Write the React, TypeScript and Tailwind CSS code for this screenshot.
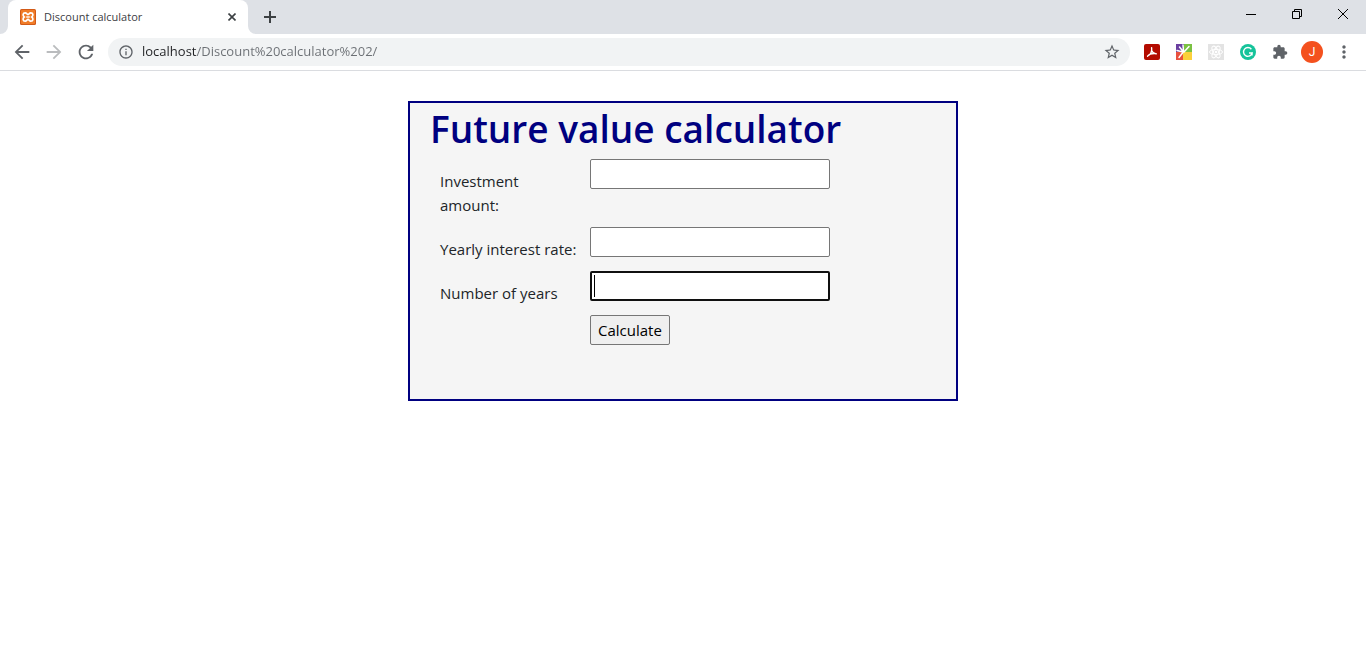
import type { ReactNode } from "react";
import {
  MdArrowBack,
  MdArrowForward,
  MdExtension,
  MdInfoOutline,
  MdMoreVert,
  MdRefresh,
  MdStarBorder,
} from "react-icons/md";

function IconButton({ label, children }: { label: string; children: ReactNode }) {
  return (
    <button type="button" aria-label={label} className="flex size-7 shrink-0 items-center justify-center text-[#5f6368]">
      {children}
    </button>
  );
}

function XamppIcon() {
  return (
    <svg viewBox="0 0 16 16" className="size-4 shrink-0" aria-hidden="true">
      <rect width="16" height="16" rx="1.5" fill="#d25a17" />
      <rect x="1" y="1" width="14" height="14" rx="1" fill="#f07c28" />
      <path
        d="M5.2 3.8c1.6 0 1.6 1.8 2.8 1.8s1.2-1.800 2.8-1.800c2.600 0 2.600 3 1 4.200 1.600 1.200 1.600 4.200-1 4.200-1.600 0-1.600-1.800-2.800-1.800s-1.200 1.800-2.800 1.800c-2.600 0-2.600-3-1-4.200-1.600-1.200-1.600-4.200 1-4.200z"
        fill="none"
        stroke="#fff"
        strokeWidth="1.700"
      />
      <path d="M6.200 8h3.600" stroke="#fff" strokeWidth="1.400" />
    </svg>
  );
}

function TabCorner({ flip }: { flip?: boolean }) {
  return (
    <svg viewBox="0 0 8 8" className={flip ? "size-2 -scale-x-100 self-end" : "size-2 self-end"} aria-hidden="true">
      <path d="M8 0v8H0a8 8 0 0 0 8-8z" fill="#fff" />
    </svg>
  );
}

function TabStrip() {
  return (
    <div className="flex h-[34px] bg-[#dee1e6]">
      <TabCorner />
      <div className="flex w-60 items-center rounded-t-lg bg-white pr-2 pl-3">
        <XamppIcon />
        <span className="ml-2 flex-1 text-[11px] text-[#3c4043]">Discount calculator</span>
        <button type="button" aria-label="Close tab" className="flex size-4 items-center justify-center">
          <svg viewBox="0 0 8 8" className="size-2" aria-hidden="true">
            <path d="M0.5 0.5l7 7M7.5 0.5l-7 7" stroke="#3c4043" strokeWidth="1.6" />
          </svg>
        </button>
      </div>
      <TabCorner flip />
      <button type="button" aria-label="New tab" className="flex w-7 items-center justify-center">
        <svg viewBox="0 0 12 12" className="size-3" aria-hidden="true">
          <path d="M6 0v12M0 6h12" stroke="#3c4043" strokeWidth="2" />
        </svg>
      </button>
      <div className="ml-auto flex h-7">
        <button type="button" aria-label="Minimize" className="flex w-[46px] items-center justify-center">
          <svg viewBox="0 0 10 10" className="size-2.5" aria-hidden="true">
            <path d="M0 5.5h10" stroke="#000" />
          </svg>
        </button>
        <button type="button" aria-label="Restore" className="flex w-[46px] items-center justify-center">
          <svg viewBox="0 0 10 10" className="size-2.5" aria-hidden="true">
            <path d="M0.5 2.5h7v7h-7zM2.5 2.5v-2h7v7h-2" fill="none" stroke="#000" />
          </svg>
        </button>
        <button type="button" aria-label="Close" className="flex w-[46px] items-center justify-center">
          <svg viewBox="0 0 10 10" className="size-2.5" aria-hidden="true">
            <path d="M0 0l10 10M10 0L0 10" stroke="#000" />
          </svg>
        </button>
      </div>
    </div>
  );
}

function Extensions() {
  return (
    <div className="flex items-center gap-1">
      <IconButton label="Adobe Acrobat">
        <svg viewBox="0 0 16 16" className="size-4" aria-hidden="true">
          <rect width="16" height="16" rx="2" fill="#b30b00" />
          <path
            d="M7.600 3.600c0.400 2.400 0.200 3.600-0.600 5.200s-2 3-3.400 3.400M3.600 12.200c1.600-2.200 4.600-3 8.600-2.600M7.600 6.500c0.800 1.800 2.200 3.200 4.600 3.400"
            fill="none"
            stroke="#fff"
            strokeWidth="1.400"
            strokeLinecap="round"
          />
        </svg>
      </IconButton>
      <IconButton label="Colour sparks">
        <svg viewBox="0 0 16 16" className="size-4" aria-hidden="true">
          <path d="M0 0h8v8H0z" fill="#6a3fa0" />
          <path d="M8 0h8v8H8z" fill="#7ac142" />
          <path d="M0 8h7v8H0z" fill="#e8503f" />
          <path d="M7 8h9v8H7z" fill="#fbd03b" />
          <path d="M7.500 8L3.500 3M7 8L1 6.500M7.500 7L7 1M8 8L13 2.500M6.500 9L3 13.500" stroke="#fff" strokeWidth="1.500" strokeLinecap="round" />
        </svg>
      </IconButton>
      <IconButton label="React Developer Tools">
        <svg viewBox="0 0 16 16" className="size-4" aria-hidden="true">
          <rect width="16" height="16" fill="#e3e3e3" />
          <g fill="none" stroke="#fff" strokeWidth="1">
            <ellipse cx="8" cy="8" rx="6.500" ry="2.600" />
            <ellipse cx="8" cy="8" rx="6.500" ry="2.600" transform="rotate(60 8 8)" />
            <ellipse cx="8" cy="8" rx="6.500" ry="2.600" transform="rotate(120 8 8)" />
          </g>
          <circle cx="8" cy="8" r="1.300" fill="#fff" />
        </svg>
      </IconButton>
      <IconButton label="Grammarly">
        <svg viewBox="0 0 16 16" className="size-4" aria-hidden="true">
          <circle cx="8" cy="8" r="8" fill="#15c39a" />
          <path d="M11.400 5.200A4.400 4.400 0 1 0 12.200 9H9M12 8.600v2.800" fill="none" stroke="#fff" strokeWidth="1.400" />
        </svg>
      </IconButton>
      <IconButton label="Extensions">
        <MdExtension className="size-4" />
      </IconButton>
    </div>
  );
}

function Toolbar() {
  return (
    <div className="flex h-[37px] items-center border-b border-[#dadce0] bg-white pr-2 pl-2">
      <div className="flex gap-1">
        <IconButton label="Back">
          <MdArrowBack className="size-[22px]" />
        </IconButton>
        <button type="button" aria-label="Forward" disabled className="flex size-7 items-center justify-center text-[#babcbe]">
          <MdArrowForward className="size-[22px]" />
        </button>
        <IconButton label="Reload">
          <MdRefresh className="size-[22px]" />
        </IconButton>
      </div>
      <div className="ml-2 flex h-7 flex-1 items-center rounded-full bg-[#f1f3f4] pr-1 pl-2.5">
        <button type="button" aria-label="View site information" className="text-[#5f6368]">
          <MdInfoOutline className="size-4" />
        </button>
        <input
          type="text"
          aria-label="Address"
          defaultValue="localhost/Discount%20calculator%202/"
          className="ml-2 min-w-0 flex-1 bg-linear-to-r from-[#202124] from-[55px] to-[#6b6f74] to-[55px] bg-clip-text text-[13px] text-transparent outline-none"
        />
        <IconButton label="Bookmark this page">
          <MdStarBorder className="size-[18px]" />
        </IconButton>
      </div>
      <div className="ml-2 flex items-center">
        <Extensions />
        <button
          type="button"
          aria-label="Profile"
          className="ml-[7px] flex size-[22px] items-center justify-center rounded-full bg-[#f4511e] font-[Roboto] text-xs text-white"
        >
          J
        </button>
        <button type="button" aria-label="Menu" className="ml-[7px] flex w-7 items-center justify-center text-[#5f6368]">
          <MdMoreVert className="size-5" />
        </button>
      </div>
    </div>
  );
}

function Field({ id, label, focused }: { id: string; label: string; focused?: boolean }) {
  return (
    <div className="flex items-start">
      <label htmlFor={id} className="w-40 shrink-0 p-2.5">
        {label}
      </label>
      <div className="relative">
        <input
          id={id}
          type="text"
          autoFocus={focused}
          className="peer block h-[30px] w-60 rounded-xs border border-[#767676] bg-white px-1 text-black caret-transparent outline-none focus:border-2 focus:border-[#101010]"
        />
        <span aria-hidden="true" className="absolute top-1 left-1 hidden h-[22px] w-px bg-black peer-focus:block" />
      </div>
    </div>
  );
}

export default function App() {
  return (
    <div className="min-h-screen bg-white font-['Open_Sans','Noto_Sans',sans-serif]">
      <header>
        <TabStrip />
        <Toolbar />
      </header>
      <main className="mx-auto mt-[30px] max-w-[550px] border-2 border-[#000080] bg-[#f5f5f5] px-5 pb-[54px] text-[15px]/[24px] text-[#212529]">
        <h1 className="pt-0.5 pb-1.5 text-[37px]/[48px] font-semibold text-[#000080]">Future value calculator</h1>
        <form onSubmit={(event) => event.preventDefault()}>
          <Field id="investment" label="Investment amount:" />
          <Field id="rate" label="Yearly interest rate:" />
          <Field id="years" label="Number of years" focused />
          <button
            type="submit"
            className="ml-40 block h-[30px] rounded-xs border border-[#767676] bg-[#efefef] px-[7px] text-black"
          >
            Calculate
          </button>
        </form>
      </main>
    </div>
  );
}
